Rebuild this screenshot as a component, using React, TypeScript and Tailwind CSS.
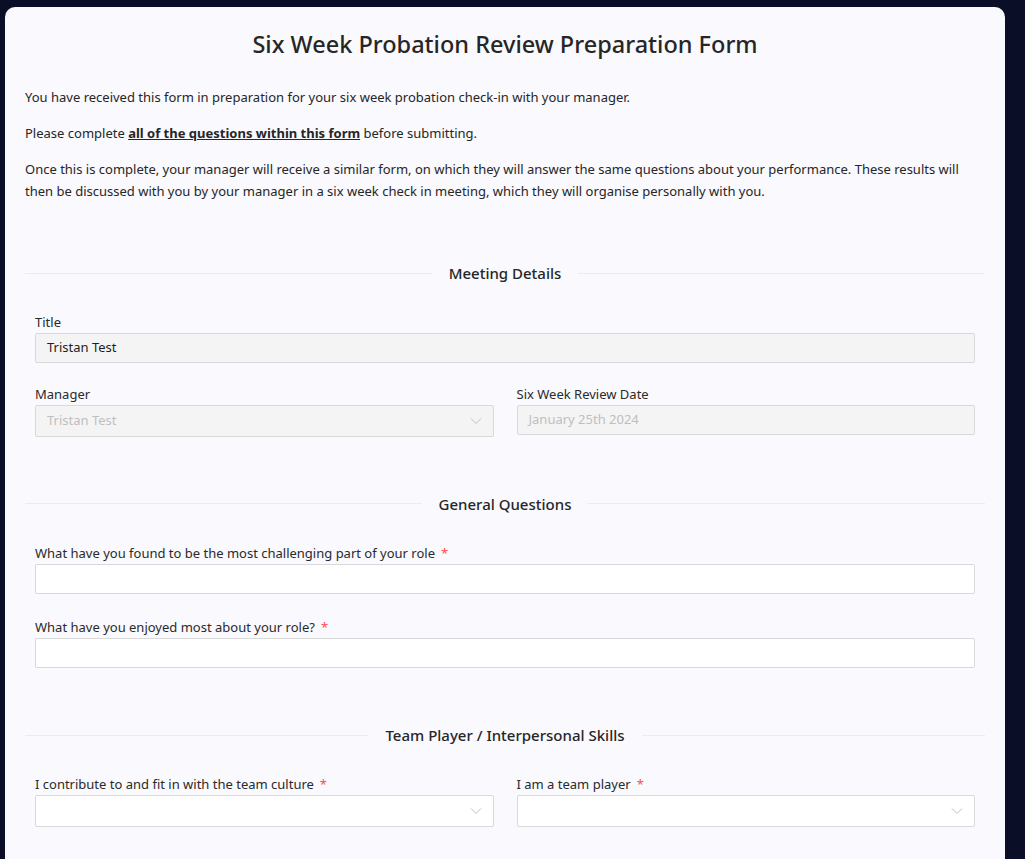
import React from "react";

const Chevron = () => (
  <svg width="12" height="12" viewBox="0 0 12 12" className="text-[#bfbfbf]">
    <path d="M1 3.5 L6 8.5 L11 3.5" fill="none" stroke="currentColor" strokeWidth="1" />
  </svg>
);

const Divider = ({ title }: { title: string }) => (
  <div className="flex items-center gap-[17px]">
    <div className="h-px flex-1 bg-[#ebebf2]" />
    <div className="text-[15px] font-medium text-[#262626]">{title}</div>
    <div className="h-px flex-1 bg-[#ebebf2]" />
  </div>
);

const Label = ({ text, req }: { text: string; req?: boolean }) => (
  <div className="text-[13px] leading-[18px] text-[#2a2a2a] mb-[2px]">
    {text}
    {req && <span className="ml-[6px] text-[#ff4d4f]">*</span>}
  </div>
);

const Input = ({ value, disabled, dim }: { value?: string; disabled?: boolean; dim?: boolean }) => (
  <div
    className={`h-[30px] rounded-[2px] border px-[11px] flex items-center text-[13px] ${
      disabled ? "bg-[#f4f4f4] border-[#d9d9d9]" : "bg-white border-[#d9d9d9]"
    } ${dim ? "text-[#bfbfbf]" : "text-[#1f1f1f]"}`}
  >
    {value}
  </div>
);

const Select = ({ value, disabled }: { value?: string; disabled?: boolean }) => (
  <div
    className={`h-[32px] rounded-[2px] border border-[#d9d9d9] pl-[11px] pr-[11px] flex items-center justify-between text-[13px] ${
      disabled ? "bg-[#f4f4f4] text-[#bfbfbf]" : "bg-white"
    }`}
  >
    <span>{value}</span>
    <Chevron />
  </div>
);

export default function App() {
  return (
    <div
      className="min-h-[859px] bg-[#0a0f27] pl-[5px] pr-[20px] pt-[7px]"
      style={{ fontFamily: '"Noto Sans", "Open Sans", sans-serif' }}
    >
      <div className="bg-[#f9f9fe] rounded-t-[10px] px-[20px] pt-[25px] pb-[40px] min-h-[852px]">
        <h1 className="text-center text-[23.5px] font-medium text-[#262626] leading-[24px]">
          Six Week Probation Review Preparation Form
        </h1>
        <div className="mt-[30px] text-[13px] leading-[22px] text-[#262626]">
          <p>You have received this form in preparation for your six week probation check-in with your manager.</p>
          <p className="mt-[14px]">
            Please complete <b className="underline font-bold">all of the questions within this form</b> before submitting.
          </p>
          <p className="mt-[14px]">
            Once this is complete, your manager will receive a similar form, on which they will answer the same questions about your performance. These results will then be discussed with you by your manager in a six week check in meeting, which they will organise personally with you.
          </p>
        </div>

        <div className="mt-[60px]">
          <Divider title="Meeting Details" />
        </div>
        <div className="px-[10px] mt-[28px]">
          <Label text="Title" />
          <Input value="Tristan Test" disabled />
          <div className="grid grid-cols-2 gap-[23px] mt-[22px]">
            <div>
              <Label text="Manager" />
              <Select value="Tristan Test" disabled />
            </div>
            <div>
              <Label text="Six Week Review Date" />
              <Input value="January 25th 2024" disabled dim />
            </div>
          </div>
        </div>

        <div className="mt-[56px]">
          <Divider title="General Questions" />
        </div>
        <div className="px-[10px] mt-[29px]">
          <Label text="What have you found to be the most challenging part of your role" req />
          <Input />
          <div className="mt-[24px]">
            <Label text="What have you enjoyed most about your role?" req />
            <Input />
          </div>
        </div>

        <div className="mt-[56px]">
          <Divider title="Team Player / Interpersonal Skills" />
        </div>
        <div className="px-[10px] mt-[28px] grid grid-cols-2 gap-[23px]">
          <div>
            <Label text="I contribute to and fit in with the team culture" req />
            <Select />
          </div>
          <div>
            <Label text="I am a team player" req />
            <Select />
          </div>
        </div>
      </div>
    </div>
  );
}
